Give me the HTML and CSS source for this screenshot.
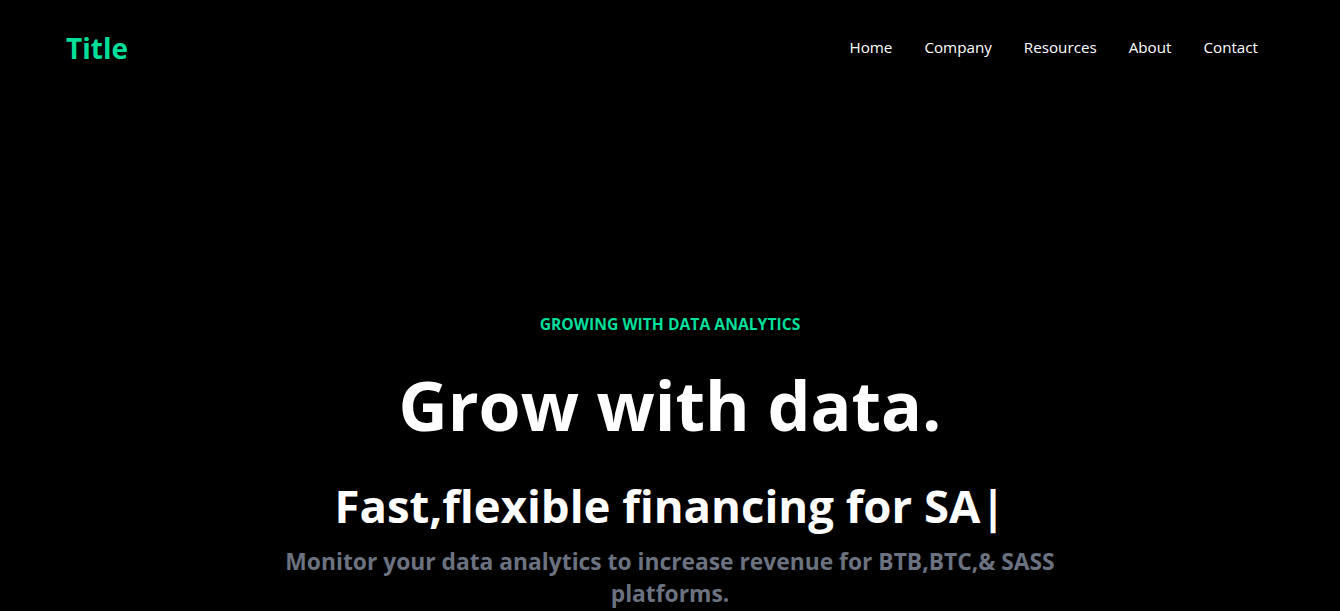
FILE: index.html
```html
<!DOCTYPE html>
<html lang="en">
<head>
<meta charset="utf-8">
<title>Title</title>
<link rel="stylesheet" href="styles.css">
</head>
<body>
<header class="nav">
  <h1 class="brand">Title</h1>
  <ul class="menu">
    <li class="menu-item">Home</li>
    <li class="menu-item">Company</li>
    <li class="menu-item">Resources</li>
    <li class="menu-item">About</li>
    <li class="menu-item">Contact</li>
  </ul>
</header>
<main class="hero">
  <p class="eyebrow">GROWING WITH DATA ANALYTICS</p>
  <h2 class="headline">Grow with data.</h2>
  <div class="typed-row">
    <p class="typed">Fast,flexible financing for SA<span class="cursor">|</span></p>
  </div>
  <p class="lead">Monitor your data analytics to increase revenue for BTB,BTC,&amp; SASS platforms.</p>
</main>
</body>
</html>
```
FILE: styles.css
```css
* { box-sizing: border-box; }
html, body { margin: 0; padding: 0; }
body {
  background: #000;
  color: #fff;
  font-family: "Open Sans", "Noto Sans", sans-serif;
  overflow: hidden;
  height: 611px;
}
.nav {
  max-width: 1240px;
  height: 96px;
  margin: 0 auto;
  padding: 0 16px;
  display: flex;
  align-items: center;
  justify-content: space-between;
}
.brand {
  margin: 0;
  font-size: 28px;
  font-weight: 700;
  color: #00df9a;
  line-height: 36px;
}
.menu {
  list-style: none;
  margin: 0 0 2px;
  padding: 0;
  display: flex;
}
.menu-item {
  padding: 16px;
  font-size: 15.2px;
  line-height: 22px;
}
.hero {
  max-width: 800px;
  margin: 0 auto;
  padding-top: 208px;
  text-align: center;
  display: flex;
  flex-direction: column;
}
.eyebrow {
  margin: 0;
  padding: 8px;
  color: #00df9a;
  font-weight: 700;
  font-size: 15.7px;
  line-height: 24px;
}
.headline {
  margin: 0;
  padding: 24px 0;
  font-size: 68px;
  line-height: 74px;
  font-weight: 700;
}
.typed-row {
  display: flex;
  justify-content: center;
}
.typed {
  margin: 0;
  padding: 15px 0 17px;
  font-size: 45.5px;
  line-height: 48px;
  font-weight: 700;
}
.cursor {
  font-weight: 700;
}
.lead {
  margin: 0;
  font-size: 22.8px;
  line-height: 32px;
  font-weight: 700;
  color: #6b7280;
}
```
